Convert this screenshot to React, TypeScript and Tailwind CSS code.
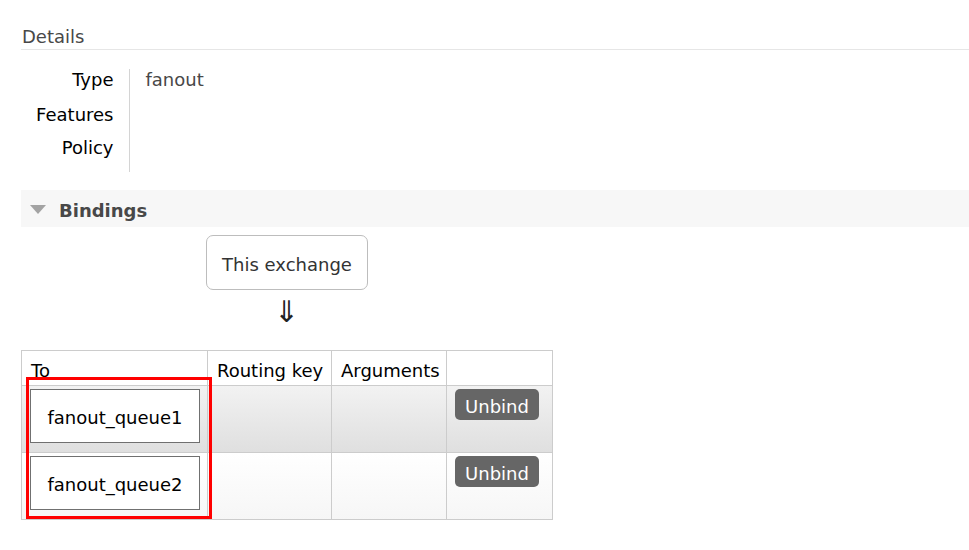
import React from 'react';

const font = { fontFamily: '"DejaVu Sans", Verdana, sans-serif' };

const details = [
    { label: 'Type', value: 'fanout', cls: 'pt-[1px] pb-[7px]' },
    { label: 'Features', value: '', cls: 'pt-[8px] pb-[4px]' },
    { label: 'Policy', value: '', cls: 'pt-[9px] pb-[14px]' },
];

const bindings = [
    { to: 'fanout_queue1', rowCls: 'bg-gradient-to-b from-[#f2f2f2] to-[#dfdfdf]' },
    { to: 'fanout_queue2', rowCls: 'bg-gradient-to-b from-[#ffffff] to-[#f6f6f6]' },
];

const App: React.FC = () => {
    return (
        <div className="w-[969px] h-[550px] overflow-hidden bg-white text-[18px] text-[#484848] pl-[21px]" style={font}>
            <h2 className="pt-[25px] pl-[1px] leading-[24px] border-b border-[#e6e6e6]">Details</h2>

            <table className="mt-[19px] border-collapse">
                <tbody>
                    {details.map((row) => (
                        <tr key={row.label}>
                            <th className={`w-[108px] text-right font-normal text-black pr-[15px] leading-[20px] align-top ${row.cls}`}>{row.label}</th>
                            <td className={`pl-[16px] leading-[20px] align-top border-l border-[#d4d4d4] ${row.cls}`}>{row.value}</td>
                        </tr>
                    ))}
                </tbody>
            </table>

            <div className="mt-[18px] h-[37px] bg-[#f7f7f7] flex items-center">
                <svg width="16" height="9" viewBox="0 0 16 9" className="ml-[9px] mr-[13px] mt-[2px]">
                    <polygon points="0,0 16,0 8,9" fill="#a3a3a3" />
                </svg>
                <span className="font-bold text-[#484848] mt-[3px]">Bindings</span>
            </div>

            <div className="w-[531px] flex flex-col items-center">
                <div className="mt-[8px] ml-[1px] w-[162px] h-[55px] border border-[#bdbdbd] rounded-[7px] flex items-center justify-center text-[#333] pt-[3px]">
                    This exchange
                </div>
                <div className="h-[60px] text-[30px] leading-[44px] text-[#222]">⇓</div>
            </div>

            <div className="relative w-[532px]">
                <table className="border-collapse text-black w-[532px]">
                    <thead>
                        <tr className="h-[35px]">
                            <th className="w-[186px] border border-[#cccccc] font-normal text-left pl-[9px] pt-[5px] leading-[24px]">To</th>
                            <th className="w-[124px] border border-[#cccccc] font-normal text-left pl-[9px] pt-[5px] leading-[24px]">Routing key</th>
                            <th className="w-[115px] border border-[#cccccc] font-normal text-left pl-[9px] pt-[5px] leading-[24px]">Arguments</th>
                            <th className="border border-[#cccccc]"></th>
                        </tr>
                    </thead>
                    <tbody>
                        {bindings.map((b) => (
                            <tr key={b.to} className={`h-[67px] ${b.rowCls}`}>
                                <td className="border border-[#cccccc] align-top pl-[8px] pt-[3px]">
                                    <div className="w-[170px] h-[54px] border border-[#707070] bg-white flex items-center justify-center pt-[3px]">{b.to}</div>
                                </td>
                                <td className="border border-[#cccccc]"></td>
                                <td className="border border-[#cccccc]"></td>
                                <td className="border border-[#cccccc] align-top pl-[8px] pt-[3px]">
                                    <button className="w-[84px] h-[31px] rounded-[5px] bg-[#666666] text-white leading-[31px] pt-[2px]">Unbind</button>
                                </td>
                            </tr>
                        ))}
                    </tbody>
                </table>
                <div className="absolute left-[5px] top-[27px] w-[186px] h-[142px] border-[3px] border-[#ff0000]"></div>
            </div>
        </div>
    );
};

export default App;
